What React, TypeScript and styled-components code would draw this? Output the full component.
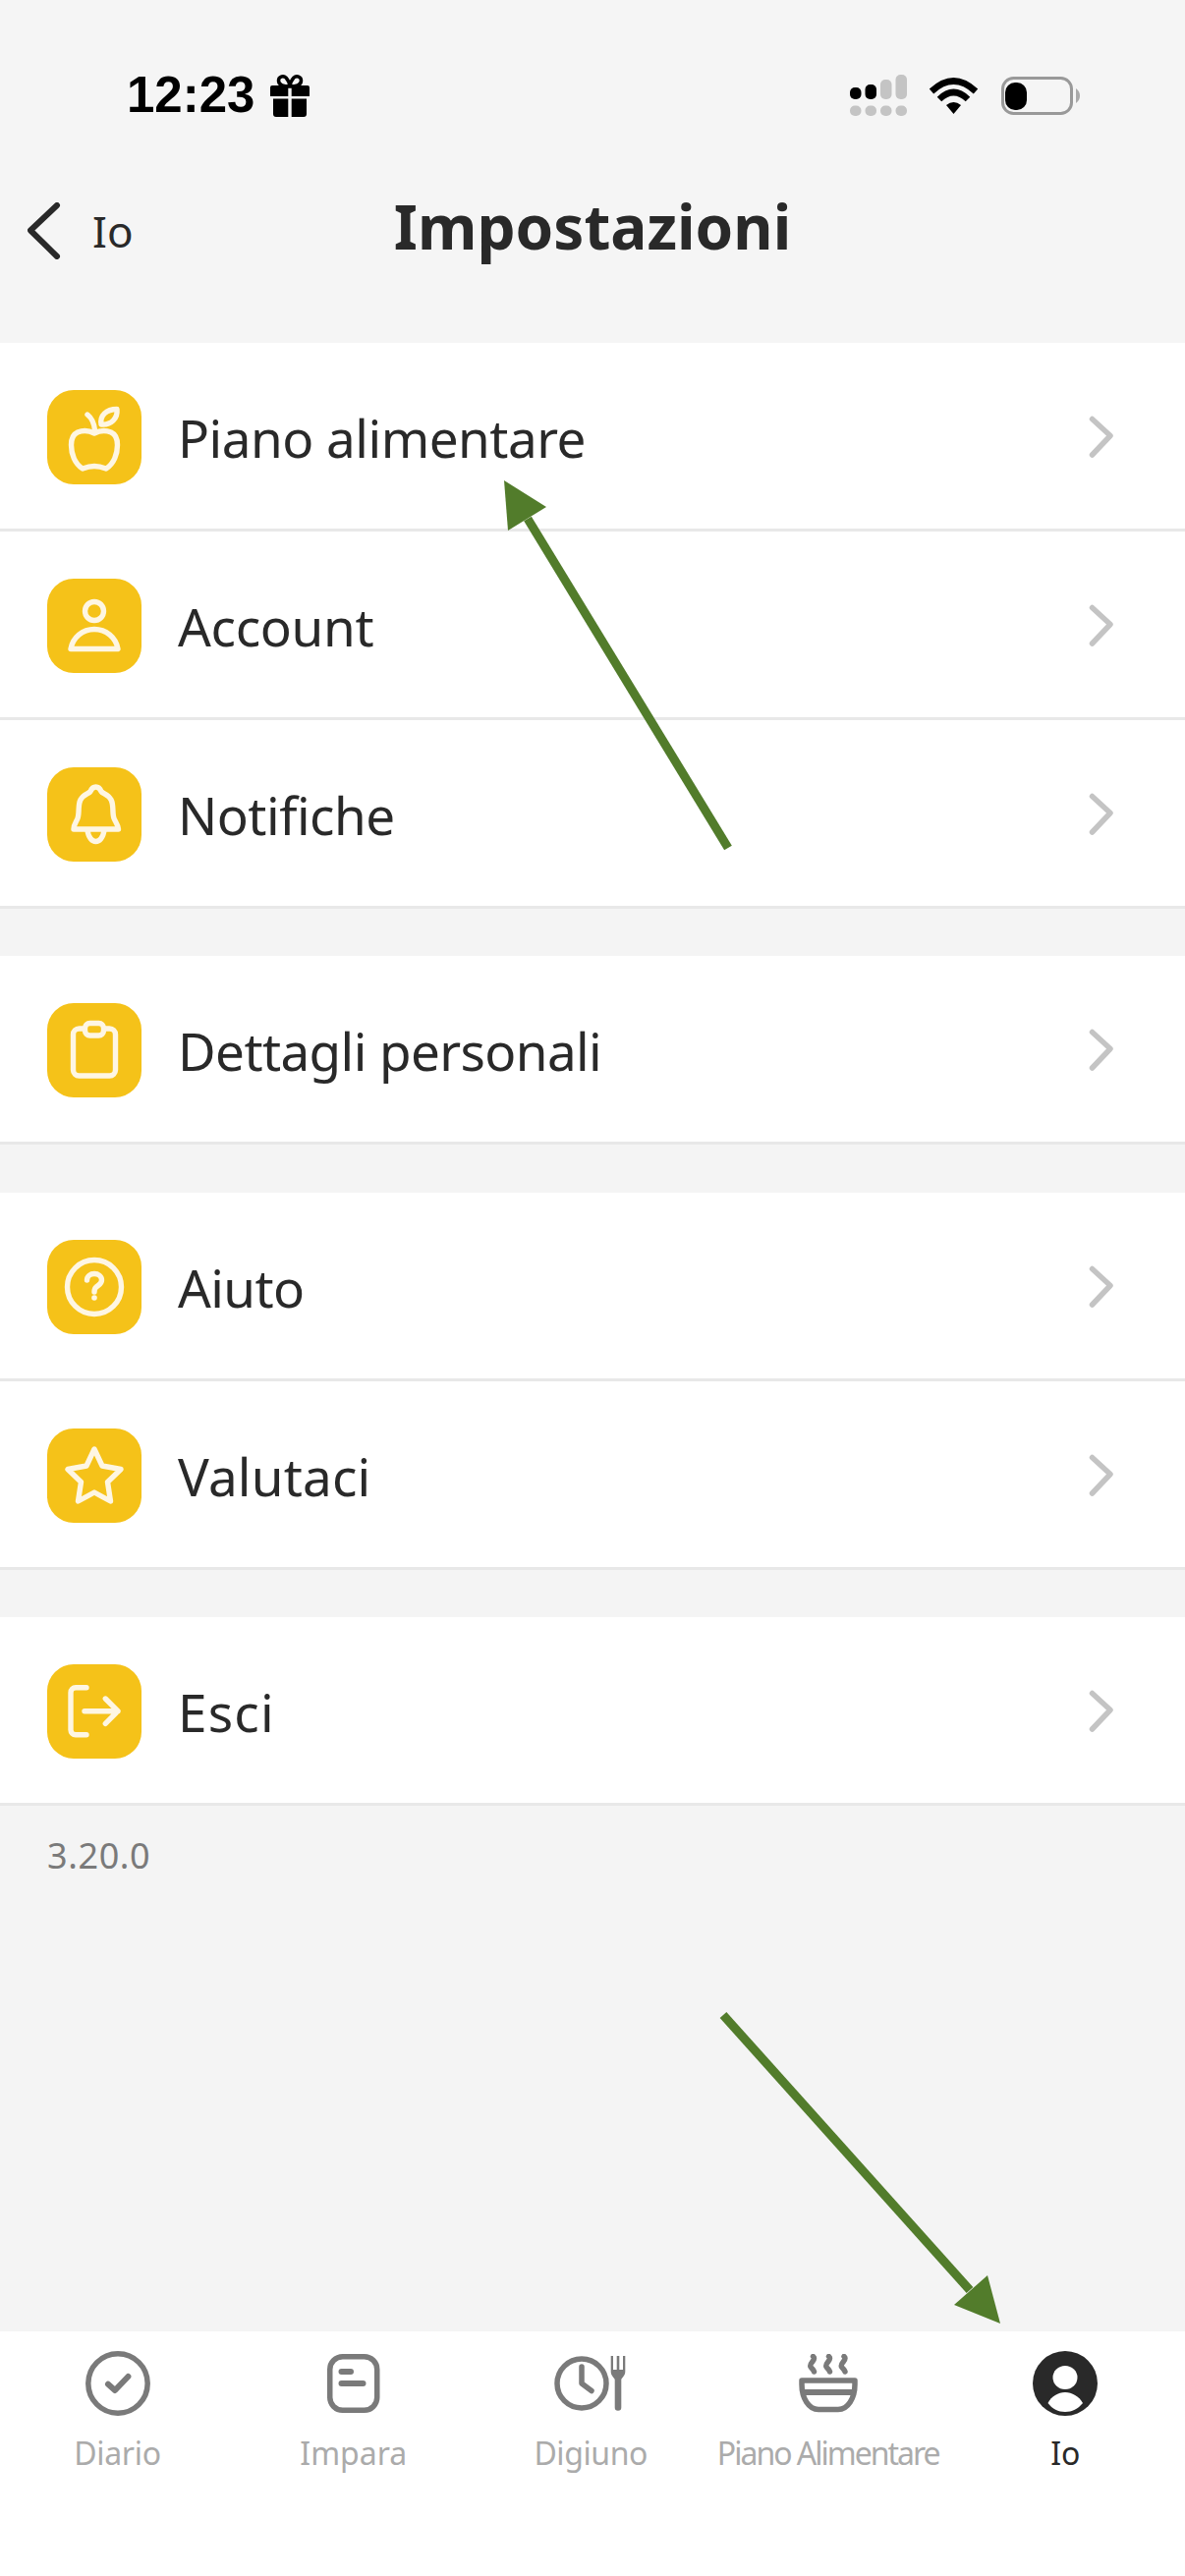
import React from "react";
import styled, { createGlobalStyle } from "styled-components";

const FONT = `"Noto Sans", "Open Sans", sans-serif`;
const ICON_LIGHT = "#FEF6E3";
const TAB_GREY = "#7A7A7A";

const GlobalStyle = createGlobalStyle`
    html, body {
        margin: 0;
        padding: 0;
        background: #F4F4F4;
    }
    body {
        font-family: ${FONT};
        color: #292929;
    }
`;

const Screen = styled.div`
    position: relative;
    width: 1206px;
    height: 2622px;
    overflow: hidden;
    display: flex;
    flex-direction: column;
    background: #F4F4F4;
`;

const StatusBar = styled.div`
    height: 130px;
    padding: 64px 107px 0 129px;
    box-sizing: border-box;
    display: flex;
    align-items: center;
    background: #F5F5F5;
`;

const Clock = styled.span`
    font-family: "Liberation Sans", Arial, sans-serif;
    font-weight: 700;
    font-size: 51px;
    line-height: 66px;
    color: #000;
`;

const StatusRight = styled.div`
    margin-left: auto;
    display: flex;
    align-items: center;
`;

const NavBar = styled.div`
    height: 219px;
    padding: 0 0 10px 28px;
    box-sizing: border-box;
    display: grid;
    grid-template-columns: 1fr auto 1fr;
    align-items: center;
    background: #F5F5F5;
`;

const BackLink = styled.div`
    display: flex;
    align-items: center;
    gap: 32px;
`;

const BackLabel = styled.span`
    font-size: 44px;
    line-height: 60px;
    color: #292929;
`;

const Title = styled.h1`
    margin: 0 0 10px -28px;
    font-size: 62px;
    line-height: 80px;
    font-weight: 700;
    color: #292929;
`;

const Group = styled.div`
    background: #fff;
    margin-bottom: 48.4px;
`;

const Row = styled.div`
    height: 192px;
    box-sizing: border-box;
    padding: 3px 72px 0 48px;
    display: flex;
    align-items: center;
    border-bottom: 3px solid #E8E8E8;
`;

const Tile = styled.div`
    width: 96px;
    height: 96px;
    flex: none;
    border-radius: 27px;
    background: #F5C219;
    margin-right: 37px;
`;

const RowLabel = styled.span<{ $spacing: number }>`
    flex: 1;
    margin-top: 2px;
    font-size: 53px;
    line-height: 70px;
    color: #292929;
    letter-spacing: ${(p) => p.$spacing}px;
`;

const Version = styled.div`
    margin-top: -22px;
    padding-left: 48px;
    font-size: 36px;
    line-height: 48px;
    letter-spacing: 0.6px;
    color: #7A7A7A;
`;

const TabBar = styled.nav`
    margin-top: auto;
    height: 249px;
    padding-top: 20px;
    box-sizing: border-box;
    display: grid;
    grid-template-columns: 239px repeat(4, 241.5px);
    background: #fff;
`;

const Tab = styled.div`
    display: flex;
    flex-direction: column;
    align-items: center;
`;

const TabIcon = styled.div`
    height: 66px;
    display: flex;
    align-items: center;
    justify-content: center;
`;

const TabLabel = styled.span<{ $active?: boolean; $spacing: number }>`
    margin-top: 15.5px;
    font-size: 32px;
    line-height: 44px;
    white-space: nowrap;
    letter-spacing: ${(p) => p.$spacing}px;
    color: ${(p) => (p.$active ? "#292929" : "#ABABAB")};
`;

const ArrowLayer = styled.svg`
    position: absolute;
    inset: 0;
    pointer-events: none;
`;

const TileSvg = ({ children }: { children: React.ReactNode }) => (
    <svg
        width="96"
        height="96"
        viewBox="0 0 96 96"
        fill="none"
        stroke={ICON_LIGHT}
        strokeWidth="5.4"
        strokeLinecap="round"
        strokeLinejoin="round"
    >
        {children}
    </svg>
);

const AppleIcon = () => (
    <TileSvg>
        <path d="M48 44C43 41.5 36 41 31 43C26.5 45 24.5 50 24.5 56C24.5 65 28 75 36 80C40 78.5 44 77.5 48 77.5C52 77.5 56 78.5 60 80C68 75 71.5 65 71.5 56C71.5 50 69.5 45 65 43C60 41 53 41.5 48 44Z" />
        <path d="M41 25C46 29 48 35 48.5 41" />
        <path d="M55 35C53.5 26 60 19.5 71 19.5C72 29 65 36 55 35Z" />
    </TileSvg>
);

const PersonIcon = () => (
    <TileSvg>
        <circle cx="48" cy="33" r="9.5" />
        <path d="M24 71.5C26 60 36 51.5 48 51.5C60 51.5 70 60 72 71.5Z" />
    </TileSvg>
);

const BellIcon = () => (
    <TileSvg>
        <path d="M49.5 20C46.5 20 45 22 44 24.5C42.5 27 37 27.5 34 33C31 38 33 47 31 52C30 55 27 58 27 63H72.5C72 58 69 55 68 52C66 47 68 38 65 33C62 27.5 56.5 27 55 24.5C54 22 52.5 20 49.5 20Z" />
        <path d="M41 64C42 72 46 75.5 49.5 75.5C53 75.5 57 72 58 64" />
    </TileSvg>
);

const ClipboardIcon = () => (
    <TileSvg>
        <rect x="26.5" y="26" width="43" height="48" rx="6" />
        <rect x="38.5" y="20.5" width="19" height="12.5" rx="5" fill="#F5C219" />
    </TileSvg>
);

const HelpIcon = () => (
    <TileSvg>
        <circle cx="48" cy="48" r="27.5" />
        <path d="M40.5 41C40.5 37 44 34.5 48 34.5C52 34.5 55.5 37 55.5 41C55.5 45 52 46 50 48C48.5 49 48 51 48 53" />
        <circle cx="48" cy="59" r="2.8" fill={ICON_LIGHT} stroke="none" />
    </TileSvg>
);

const StarIcon = () => (
    <TileSvg>
        <path d="M48 21L56 38L75 41.5L61.5 54.5L64.5 74L48 65L31.5 74L34.5 54.5L21 41.5L40 38Z" />
    </TileSvg>
);

const ExitIcon = () => (
    <TileSvg>
        <path d="M40 23.7H29A5 5 0 0 0 24 28.7V66.7A5 5 0 0 0 29 71.7H40" />
        <path d="M38 47.7H72M59.3 35L72 47.7L59.3 60.3" />
    </TileSvg>
);

const RowChevron = () => (
    <svg width="26" height="44" viewBox="0 0 26 44" fill="none" stroke="#C4C4C4" strokeWidth="5.5" strokeLinecap="round" strokeLinejoin="round">
        <path d="M3.5 3.5L22 20.5L3.5 40" />
    </svg>
);

const GiftIcon = () => (
    <svg width="40" height="43" viewBox="0 0 40 43" style={{ marginLeft: 16 }}>
        <path d="M20 12C14 12 8.5 11 8.5 6C8.5 2 13 0.5 16 3C18 5 19.5 9 20 12C20.5 9 22 5 24 3C27 0.5 31.5 2 31.5 6C31.5 11 26 12 20 12Z" fill="none" stroke="#000" strokeWidth="3.5" />
        <path d="M2 11H18.3V22H0V13A2 2 0 0 1 2 11ZM21.7 11H38A2 2 0 0 1 40 13V22H21.7ZM3 24.5H18.3V43H6A3 3 0 0 1 3 40ZM21.7 24.5H37V40A3 3 0 0 1 34 43H21.7Z" fill="#000" />
    </svg>
);

const SignalIcon = () => (
    <svg width="58" height="42" viewBox="0 0 58 42">
        <rect x="0" y="13" width="11.5" height="12" rx="5" fill="#000" />
        <rect x="15.5" y="10" width="11.5" height="15" rx="5" fill="#000" />
        <rect x="31" y="5" width="11.5" height="20" rx="5" fill="#C4C4C4" />
        <rect x="46.5" y="0" width="11.5" height="25" rx="5" fill="#C4C4C4" />
        <rect x="0" y="31.5" width="11.5" height="10.5" rx="5" fill="#C4C4C4" />
        <rect x="15.5" y="31.5" width="11.5" height="10.5" rx="5" fill="#C4C4C4" />
        <rect x="31" y="31.5" width="11.5" height="10.5" rx="5" fill="#C4C4C4" />
        <rect x="46.5" y="31.5" width="11.5" height="10.5" rx="5" fill="#C4C4C4" />
    </svg>
);

const WifiIcon = () => (
    <svg width="51" height="37" viewBox="0 0 51 37" fill="none" stroke="#000" strokeWidth="6.5" style={{ marginLeft: 22 }}>
        <path d="M3 14Q25.5 -7 48 14" />
        <path d="M11 22Q25.5 8 40 22" />
        <path d="M25.5 37L18 28Q25.5 22 33 28Z" fill="#000" stroke="none" />
    </svg>
);

const BatteryIcon = () => (
    <svg width="80" height="39" viewBox="0 0 80 39" style={{ marginLeft: 23 }}>
        <rect x="1.5" y="1.5" width="70" height="36" rx="11" fill="none" stroke="#999" strokeWidth="3" />
        <rect x="4" y="6" width="22" height="28" rx="10" fill="#000" />
        <path d="M76 12C79 14 80 17 80 19.5C80 22 79 25 76 27Z" fill="#AAA" />
    </svg>
);

const BackChevron = () => (
    <svg width="34" height="58" viewBox="0 0 34 58" fill="none" stroke="#292929" strokeWidth="6" strokeLinecap="round" strokeLinejoin="round">
        <path d="M30 3L3 28.5L30 55" />
    </svg>
);

const TabSvg = ({ w, h, children }: { w: number; h: number; children: React.ReactNode }) => (
    <svg
        width={w}
        height={h}
        viewBox={`0 0 ${w} ${h}`}
        fill="none"
        stroke={TAB_GREY}
        strokeWidth="5.5"
        strokeLinecap="round"
        strokeLinejoin="round"
    >
        {children}
    </svg>
);

const DiaryIcon = () => (
    <TabSvg w={66} h={66}>
        <circle cx="33" cy="33" r="30.2" />
        <path d="M23 33.7L30 40L43.4 26" strokeWidth="6" />
    </TabSvg>
);

const LearnIcon = () => (
    <TabSvg w={54} h={60}>
        <rect x="2.75" y="2.75" width="48" height="54.5" rx="13" />
        <path d="M14.5 18H24M14.5 30H36.5" strokeWidth="6" />
    </TabSvg>
);

const FastingIcon = () => (
    <TabSvg w={74} h={56}>
        <circle cx="28" cy="28" r="25" />
        <path d="M28 11V28L38 35.5" />
        <path
            d="M57.7 0H60V14H63.7V0H66.3V14H70V0H72.3V16C72.3 20 69 22 68.3 24V52.5A3.3 3.3 0 0 1 61.7 52.5V24C61 22 57.7 20 57.7 16Z"
            fill={TAB_GREY}
            stroke="none"
        />
    </TabSvg>
);

const BowlIcon = () => (
    <TabSvg w={60} h={60}>
        <path d="M3 27H57V31C57 45 50 56.5 40 56.5H20C10 56.5 3 45 3 31Z" />
        <path d="M5 39H55" strokeWidth="6" />
        <path d="M14.5 2.5C18.5 6 10 9 12 13C13 15 15 16 15.5 18" />
        <path d="M30.5 2.5C34.5 6 26 9 28 13C29 15 31 16 31.5 18" />
        <path d="M46 2.5C50 6 41.5 9 43.5 13C44.5 15 46.5 16 47 18" />
    </TabSvg>
);

const MeIcon = () => (
    <svg width="66" height="66" viewBox="0 0 66 66">
        <circle cx="33" cy="33" r="33" fill="#292929" />
        <ellipse cx="33" cy="27" rx="12.5" ry="12" fill="#fff" />
        <path d="M15.5 53C19 46 26 42 33 42C40 42 47 46 51 53C46 59 40 62 33 62C26 62 20 59 15.5 53Z" fill="#fff" />
    </svg>
);

type RowItem = { label: string; icon: React.ReactNode; spacing: number };

const groups: RowItem[][] = [
    [
        { label: "Piano alimentare", icon: <AppleIcon />, spacing: -0.5 },
        { label: "Account", icon: <PersonIcon />, spacing: -0.3 },
        { label: "Notifiche", icon: <BellIcon />, spacing: -0.5 },
    ],
    [{ label: "Dettagli personali", icon: <ClipboardIcon />, spacing: -0.6 }],
    [
        { label: "Aiuto", icon: <HelpIcon />, spacing: -0.6 },
        { label: "Valutaci", icon: <StarIcon />, spacing: 0.2 },
    ],
    [{ label: "Esci", icon: <ExitIcon />, spacing: 1.2 }],
];

const tabs = [
    { label: "Diario", icon: <DiaryIcon />, spacing: -0.3 },
    { label: "Impara", icon: <LearnIcon />, spacing: 0 },
    { label: "Digiuno", icon: <FastingIcon />, spacing: -0.4 },
    { label: "Piano Alimentare", icon: <BowlIcon />, spacing: -2 },
    { label: "Io", icon: <MeIcon />, spacing: 0, active: true },
];

const App = () => {
    return (
        <Screen>
            <GlobalStyle />
            <StatusBar>
                <Clock>12:23</Clock>
                <GiftIcon />
                <StatusRight>
                    <SignalIcon />
                    <WifiIcon />
                    <BatteryIcon />
                </StatusRight>
            </StatusBar>
            <NavBar>
                <BackLink>
                    <BackChevron />
                    <BackLabel>Io</BackLabel>
                </BackLink>
                <Title>Impostazioni</Title>
            </NavBar>
            {groups.map((rows, i) => (
                <Group key={i}>
                    {rows.map((row) => (
                        <Row key={row.label}>
                            <Tile>{row.icon}</Tile>
                            <RowLabel $spacing={row.spacing}>{row.label}</RowLabel>
                            <RowChevron />
                        </Row>
                    ))}
                </Group>
            ))}
            <Version>3.20.0</Version>
            <TabBar>
                {tabs.map((tab) => (
                    <Tab key={tab.label}>
                        <TabIcon>{tab.icon}</TabIcon>
                        <TabLabel $active={tab.active} $spacing={tab.spacing}>{tab.label}</TabLabel>
                    </Tab>
                ))}
            </TabBar>
            {/* the two annotation arrows drawn over the screenshot */}
            <ArrowLayer width="1206" height="2622" viewBox="0 0 1206 2622">
                <path d="M741 863L537 528" stroke="#527C2B" strokeWidth="9" />
                <path d="M513 489L556 516L517 540Z" fill="#527C2B" />
                <path d="M736 2051L987 2331" stroke="#527C2B" strokeWidth="9" />
                <path d="M1018 2365L1005 2316L971 2346Z" fill="#527C2B" />
            </ArrowLayer>
        </Screen>
    );
};

export default App;
